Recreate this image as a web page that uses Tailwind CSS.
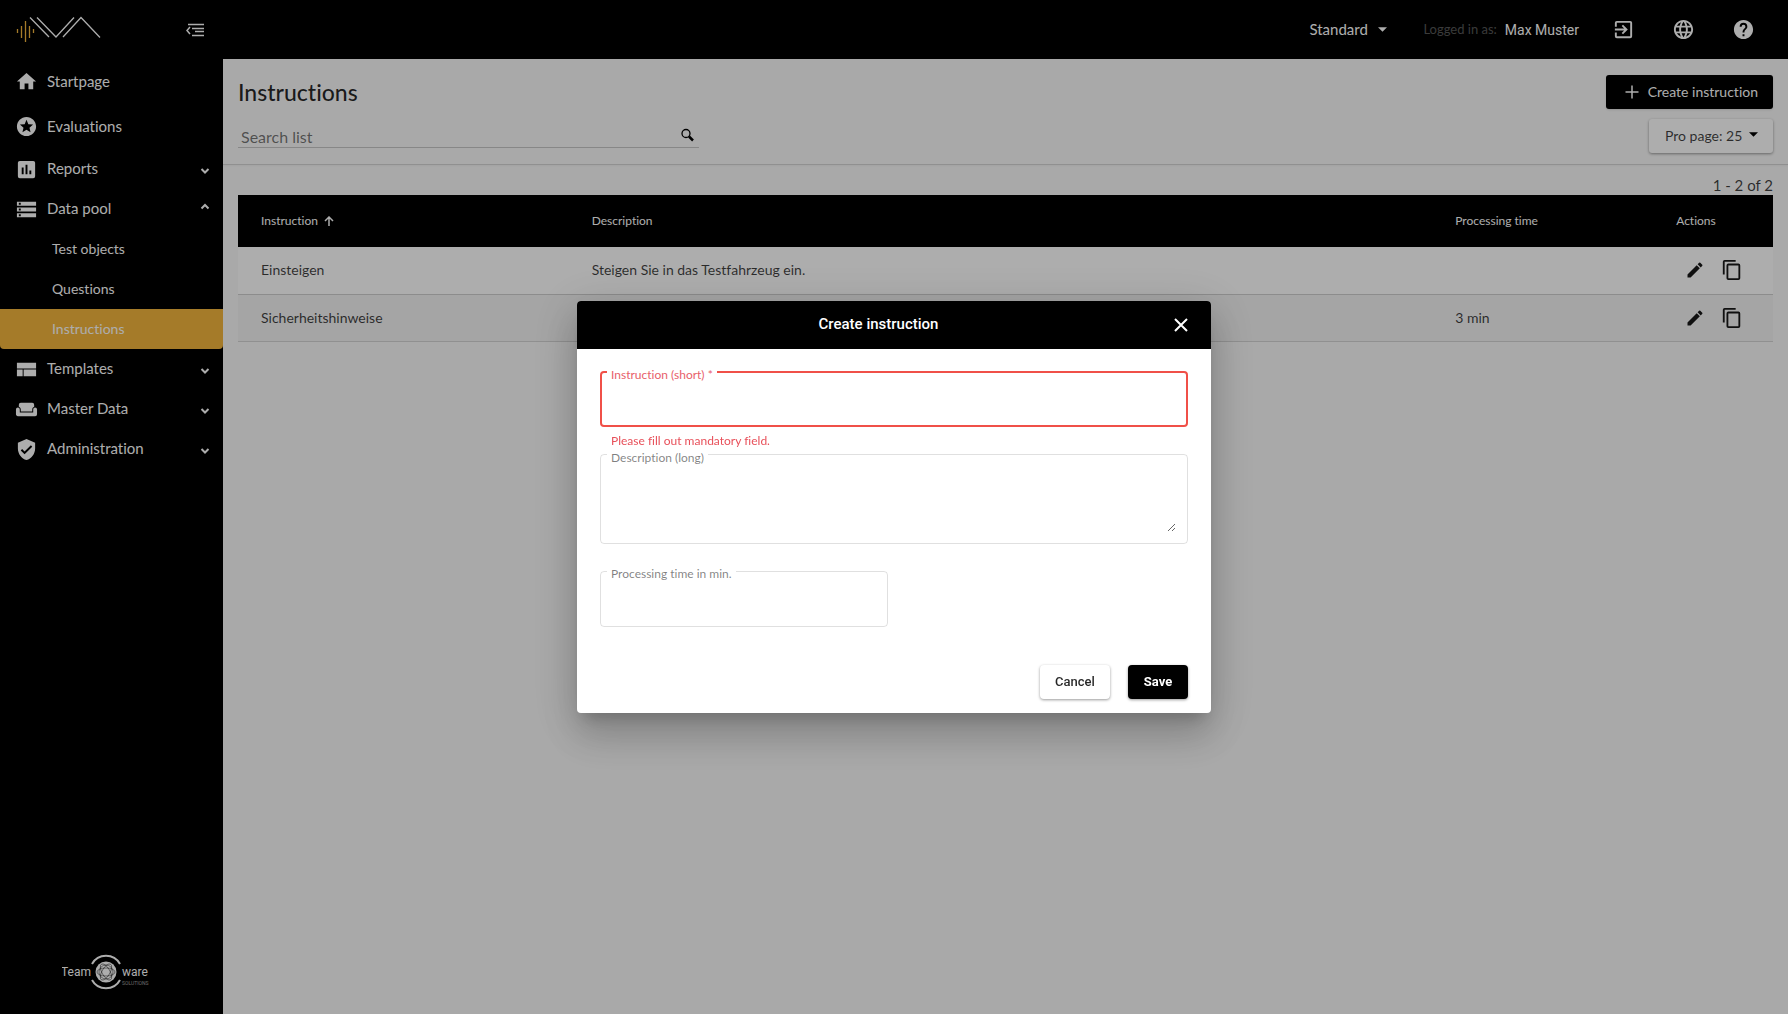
<!DOCTYPE html>
<html lang="en">
<head>
<meta charset="utf-8">
<meta name="viewport" content="width=device-width, initial-scale=1">
<title>Instructions</title>
<script src="https://cdn.jsdelivr.net/npm/@tailwindcss/browser@4"></script>
</head>
<body class="flex h-screen flex-col overflow-hidden bg-[#fafafa] font-[Lato,sans-serif] text-sm text-black/75 [font-variant-ligatures:none]">

<!-- Icon sprite -->
<svg class="hidden" aria-hidden="true">
  <symbol id="chev-down" viewBox="0 0 10 10"><path d="M1.500 3 5 6.500 8.500 3" fill="none" stroke="currentColor" stroke-width="2"/></symbol>
  <symbol id="chev-up" viewBox="0 0 10 10"><path d="M1.500 6.500 5 3l3.500 3.500" fill="none" stroke="currentColor" stroke-width="2"/></symbol>
  <symbol id="caret" viewBox="0 0 10 5"><path d="M0 0h10L5 5z" fill="currentColor"/></symbol>
  <symbol id="pencil" viewBox="0 0 24 24"><path fill="currentColor" d="M3 17.250V21h3.750L17.810 9.940l-3.750-3.750L3 17.250zM20.710 7.040a1 1 0 0 0 0-1.410l-2.340-2.340a1 1 0 0 0-1.410 0l-1.830 1.830 3.750 3.750 1.830-1.830z"/></symbol>
  <symbol id="copy" viewBox="0 0 24 24"><path fill="currentColor" d="M16 1H4a2 2 0 0 0-2 2v14h2V3h12V1zm3 4H8a2 2 0 0 0-2 2v14a2 2 0 0 0 2 2h11a2 2 0 0 0 2-2V7a2 2 0 0 0-2-2zm0 16H8V7h11v14z"/></symbol>
</svg>

<header class="flex h-[59px] shrink-0 items-center bg-black text-white">
  <div class="flex w-[223px] shrink-0 items-center justify-between pr-[18px] pl-4">
    <svg class="h-7 w-[86px]" viewBox="0 0 86 28" fill="none" aria-label="IVA">
      <path d="M1.500 13v4M5.500 10v12M9.500 5v21M13.500 10v12M17.500 13v4" stroke="#f4b63d" stroke-width="1.300"/>
      <path d="M14 1.500 33 21M21 1.500 40 21 58 1.500M47 21 65 1.500 84 21.500" stroke="#fff" stroke-width="1.300"/>
    </svg>
    <button aria-label="Collapse menu">
      <svg class="h-4 w-5" viewBox="0 0 20 16" fill="none" stroke="#fff" stroke-width="1.500"><path d="M3 2.500h16M7 6.500h12M10 9.500h9M7 13.500h12M5 5 2 8.500 5 12"/></svg>
    </button>
  </div>
  <div class="ml-auto flex items-center pr-[33px]">
    <label class="relative flex items-center">
      <span class="sr-only">Mode</span>
      <select class="h-8 w-[78px] appearance-none bg-transparent text-[15px]"><option>Standard</option></select>
      <svg class="pointer-events-none absolute right-0 h-[5px] w-[9px]"><use href="#caret"/></svg>
    </label>
    <span class="ml-9 text-[13px] text-white/35">Logged in as:</span>
    <span class="ml-2 font-[Roboto,sans-serif]">Max Muster</span>
    <div class="ml-[33px] flex gap-[37px]">
      <button aria-label="Log out"><svg class="size-[23px]" viewBox="0 0 24 24" fill="currentColor"><path d="M10.090 15.590 11.500 17l5-5-5-5-1.410 1.410L12.670 11H3v2h9.670l-2.580 2.590zM19 3H5a2 2 0 0 0-2 2v4h2V5h14v14H5v-4H3v4a2 2 0 0 0 2 2h14a2 2 0 0 0 2-2V5a2 2 0 0 0-2-2z"/></svg></button>
      <button aria-label="Language"><svg class="size-[23px]" viewBox="0 0 24 24" fill="currentColor"><path d="M11.990 2C6.470 2 2 6.480 2 12s4.470 10 9.990 10C17.520 22 22 17.520 22 12S17.520 2 11.990 2zm6.930 6h-2.950a15.650 15.650 0 0 0-1.380-3.560A8.030 8.030 0 0 1 18.920 8zM12 4.040c.83 1.200 1.480 2.530 1.910 3.960h-3.820c.43-1.430 1.080-2.760 1.910-3.960zM4.260 14C4.100 13.360 4 12.690 4 12s.1-1.360.26-2h3.380c-.08.66-.14 1.320-.14 2s.06 1.340.14 2H4.260zm.82 2h2.950c.32 1.250.78 2.450 1.380 3.560A7.990 7.990 0 0 1 5.080 16zm2.950-8H5.080a7.990 7.990 0 0 1 4.330-3.560A15.650 15.650 0 0 0 8.030 8zM12 19.960c-.83-1.200-1.480-2.530-1.910-3.960h3.820c-.43 1.430-1.080 2.760-1.910 3.960zM14.340 14H9.660c-.09-.66-.16-1.320-.16-2s.07-1.350.16-2h4.680c.09.650.16 1.320.16 2s-.07 1.340-.16 2zm.25 5.560c.6-1.110 1.060-2.310 1.380-3.560h2.950a8.030 8.030 0 0 1-4.330 3.560zM16.360 14c.08-.66.14-1.320.14-2s-.06-1.340-.14-2h3.380c.16.640.26 1.310.26 2s-.1 1.360-.26 2h-3.380z"/></svg></button>
      <button aria-label="Help"><svg class="size-[23px]" viewBox="0 0 24 24" fill="currentColor"><path d="M12 2C6.480 2 2 6.480 2 12s4.480 10 10 10 10-4.480 10-10S17.520 2 12 2zm1 17h-2v-2h2v2zm2.070-7.750-.9.920C13.450 12.900 13 13.500 13 15h-2v-.5c0-1.100.45-2.100 1.170-2.830l1.240-1.260c.37-.36.590-.86.590-1.410a2 2 0 0 0-4 0H8a4 4 0 0 1 8 0c0 .88-.36 1.680-.93 2.250z"/></svg></button>
    </div>
  </div>
</header>

<div class="flex min-h-0 flex-1">
  <nav class="flex w-[223px] shrink-0 flex-col bg-black text-[15px] text-white" aria-label="Main">
    <a href="#" class="flex h-[45px] items-center gap-[9px] pl-[15px]"><svg class="size-[23px]" viewBox="0 0 24 24" fill="currentColor"><path d="M10 20v-6h4v6h5v-8h3L12 3 2 12h3v8z"/></svg>Startpage</a>
    <a href="#" class="flex h-[45px] items-center gap-[9px] pl-[15px]"><svg class="size-[23px]" viewBox="0 0 24 24" fill="currentColor"><path d="M11.990 2C6.470 2 2 6.480 2 12s4.470 10 9.990 10C17.520 22 22 17.520 22 12S17.520 2 11.990 2zm4.240 16L12 15.450 7.770 18l1.120-4.810-3.730-3.230 4.920-.42L12 5l1.920 4.530 4.920.42-3.730 3.230L16.230 18z"/></svg>Evaluations</a>
    <a href="#" class="flex h-10 items-center gap-[9px] pr-[13px] pl-[15px]"><svg class="size-[23px]" viewBox="0 0 24 24" fill="currentColor"><path d="M19 3H5a2 2 0 0 0-2 2v14a2 2 0 0 0 2 2h14a2 2 0 0 0 2-2V5a2 2 0 0 0-2-2zM9 17H7v-7h2v7zm4 0h-2V7h2v10zm4 0h-2v-4h2v4z"/></svg>Reports<svg class="mt-1 ml-auto size-[10px]"><use href="#chev-down"/></svg></a>
    <a href="#" class="flex h-10 items-center gap-[9px] pr-[13px] pl-[15px]"><svg class="size-[23px]" viewBox="0 0 24 24" fill="currentColor"><path d="M2 20h20v-4H2v4zm2-3h2v2H4v-2zM2 4v4h20V4H2zm4 3H4V5h2v2zm-4 7h20v-4H2v4zm2-3h2v2H4v-2z"/></svg>Data pool<svg class="mb-1 ml-auto size-[10px]"><use href="#chev-up"/></svg></a>
    <a href="#" class="flex h-10 items-center pl-[52px] text-sm">Test objects</a>
    <a href="#" class="flex h-10 items-center pl-[52px] text-sm">Questions</a>
    <a href="#" aria-current="page" class="flex h-10 items-center rounded-b bg-[#f4b63d] pl-[52px] text-sm">Instructions</a>
    <a href="#" class="flex h-10 items-center gap-[9px] pr-[13px] pl-[15px]"><svg class="size-[23px]" viewBox="0 0 24 24" fill="currentColor"><path d="M2 5h20v6H2zM2 12h6v7H2zM9 12h13v7H9z"/></svg>Templates<svg class="mt-1 ml-auto size-[10px]"><use href="#chev-down"/></svg></a>
    <a href="#" class="flex h-10 items-center gap-[9px] pr-[13px] pl-[15px]"><svg class="size-[23px]" viewBox="0 0 24 24" fill="currentColor"><path d="M21 10a2 2 0 0 0-2 2v3H5v-3a2 2 0 1 0-4 0v5c0 1.100.9 2 2 2h18a2 2 0 0 0 2-2v-5a2 2 0 0 0-2-2zM18 5H6a2 2 0 0 0-2 2v2.150c1.160.41 2 1.510 2 2.820V14h12v-2.030c0-1.300.84-2.400 2-2.820V7a2 2 0 0 0-2-2z"/></svg>Master Data<svg class="mt-1 ml-auto size-[10px]"><use href="#chev-down"/></svg></a>
    <a href="#" class="flex h-10 items-center gap-[9px] pr-[13px] pl-[15px]"><svg class="size-[23px]" viewBox="0 0 24 24" fill="currentColor"><path d="M12 1 3 5v6c0 5.550 3.840 10.740 9 12 5.160-1.260 9-6.450 9-12V5l-9-4zm-2 16-4-4 1.410-1.410L10 14.170l6.590-6.590L18 9l-8 8z"/></svg>Administration<svg class="mt-1 ml-auto size-[10px]"><use href="#chev-down"/></svg></a>

    <!-- Vendor logo -->
    <svg class="mx-auto mt-auto mb-5 h-11 w-[100px]" viewBox="0 0 100 44" fill="#fff" aria-label="Teamware Solutions">
      <text x="29" y="26" text-anchor="end" font-family="Roboto, sans-serif" font-size="12">Team</text>
      <text x="60" y="26" font-family="Roboto, sans-serif" font-size="12">ware</text>
      <text x="60" y="35" font-family="Roboto, sans-serif" font-size="5" fill-opacity=".6">SOLUTIONS</text>
      <circle cx="44" cy="22" r="10.500"/>
      <g fill="none" stroke="#000" stroke-opacity=".55" stroke-width=".8"><ellipse cx="44" cy="22" rx="9" ry="4"/><ellipse cx="44" cy="22" rx="9" ry="4" transform="rotate(60 44 22)"/><ellipse cx="44" cy="22" rx="9" ry="4" transform="rotate(120 44 22)"/><circle cx="44" cy="22" r="7"/></g>
      <path d="M30 14a16 16 0 0 1 28 0M30 30a16 16 0 0 0 28 0" fill="none" stroke="#fff" stroke-width="2"/>
    </svg>
  </nav>

  <main class="min-w-0 flex-1">
    <div class="flex h-[106px] items-start justify-between border-b border-black/15 px-[15px] shadow-xs">
      <div class="w-[461px] pt-[18px]">
        <h1 class="text-[23px] leading-[30px] font-medium text-black/85">Instructions</h1>
        <label class="mt-[15px] flex h-[26px] items-center border-b border-black/20 pr-1">
          <span class="sr-only">Search list</span>
          <input type="text" placeholder="Search list" class="h-6 min-w-0 flex-1 pt-1 pl-[3px] text-base leading-5 placeholder:text-black/55">
          <svg class="size-4 text-black" viewBox="0 0 16 16" fill="none" stroke="currentColor"><circle cx="7" cy="6.500" r="4" stroke-width="1.300"/><path d="m10 9.500 4 4" stroke-width="2.500"/></svg>
        </label>
      </div>
      <div class="flex flex-col items-end gap-[10px] pt-4">
        <button class="flex h-[34px] w-[167px] items-center justify-between rounded-[3px] bg-black pr-[15px] pl-[18px] whitespace-nowrap text-white shadow"><svg class="size-4" viewBox="0 0 16 16" stroke="currentColor" stroke-width="1.500"><path d="M8 1.500v13M1.500 8h13"/></svg>Create instruction</button>
        <label class="relative flex h-[34px] w-[124px] items-center rounded-[3px] bg-white shadow-[0_1px_3px_rgba(0,0,0,0.4)]">
          <span class="sr-only">Entries per page</span>
          <select class="h-full w-full appearance-none pl-4"><option>Pro page: 25</option></select>
          <svg class="pointer-events-none absolute right-[15px] mb-1 h-[5px] w-[9px] text-black"><use href="#caret"/></svg>
        </label>
      </div>
    </div>

    <div class="px-[15px] pt-[10px]">
      <p class="text-right text-[15px] leading-5">1 - 2 of 2</p>
      <table class="w-full table-fixed border-collapse text-left">
        <colgroup><col class="w-[22%]"><col class="w-[56%]"><col class="w-[14%]"><col></colgroup>
        <thead class="bg-black text-xs text-white">
          <tr class="h-[52px]">
            <th class="pl-[23px] font-normal" aria-sort="ascending"><span class="flex items-center gap-[6px]">Instruction<svg class="size-[10px]" viewBox="0 0 10 10" fill="none" stroke="currentColor" stroke-width="1.500"><path d="M5 10V1M1 5l4-4 4 4"/></svg></span></th>
            <th class="pl-4 font-normal">Description</th>
            <th class="pl-5 font-normal">Processing time</th>
            <th class="pl-[26px] font-normal">Actions</th>
          </tr>
        </thead>
        <tbody>
          <tr class="h-[47px] border-b border-black/15 bg-white">
            <td class="pl-[23px]">Einsteigen</td>
            <td class="pl-4">Steigen Sie in das Testfahrzeug ein.</td>
            <td class="pl-5"></td>
            <td class="pr-[30px]"><span class="flex items-center justify-end gap-4 text-black/90"><button aria-label="Edit"><svg class="size-5"><use href="#pencil"/></svg></button><button aria-label="Copy"><svg class="size-[22px]"><use href="#copy"/></svg></button></span></td>
          </tr>
          <tr class="h-[47px] border-b border-black/15 bg-[#f3f3f3]">
            <td class="pl-[23px]">Sicherheitshinweise</td>
            <td class="pl-4"></td>
            <td class="pl-5">3 min</td>
            <td class="pr-[30px]"><span class="flex items-center justify-end gap-4 text-black/90"><button aria-label="Edit"><svg class="size-5"><use href="#pencil"/></svg></button><button aria-label="Copy"><svg class="size-[22px]"><use href="#copy"/></svg></button></span></td>
          </tr>
        </tbody>
      </table>
    </div>
  </main>
</div>

<!-- Modal dialog -->
<div class="fixed inset-0 flex items-center justify-center bg-black/32">
  <form role="dialog" aria-modal="true" aria-labelledby="dialog-title" class="w-[634px] overflow-hidden rounded bg-white shadow-[0_11px_15px_-7px_rgba(0,0,0,0.2),0_24px_38px_3px_rgba(0,0,0,0.14),0_9px_46px_8px_rgba(0,0,0,0.12)]">
    <div class="flex h-12 items-center bg-black pr-[23px] pl-[6px] text-white">
      <h2 id="dialog-title" class="flex-1 text-center font-[Roboto,sans-serif] text-[15px] font-medium">Create instruction</h2>
      <button type="button" aria-label="Close"><svg class="size-[14px]" viewBox="0 0 14 14" stroke="currentColor" stroke-width="2"><path d="m1 1 12 12M13 1 1 13"/></svg></button>
    </div>
    <div class="px-[23px] pt-[22px] pb-[14px]">
      <div class="relative">
        <input id="short" required class="block h-14 w-full rounded border-2 border-[#f05048] px-3">
        <label for="short" class="absolute -top-1 left-[7px] bg-white px-1 text-xs leading-4 text-[#e8606a]">Instruction (short) *</label>
      </div>
      <p class="mt-[5px] pl-[11px] text-xs leading-[18px] text-[#e8505a]">Please fill out mandatory field.</p>
      <div class="relative mt-1 rounded border border-black/12 p-[11px]">
        <textarea id="long" class="block h-[66px] w-full resize-y"></textarea>
        <label for="long" class="absolute -top-[5px] left-[6px] bg-white px-1 text-xs leading-4 text-black/50">Description (long)</label>
      </div>
      <div class="relative mt-[27px] w-[288px]">
        <input id="time" inputmode="numeric" class="block h-14 w-full rounded border border-black/12 px-3">
        <label for="time" class="absolute -top-[5px] left-[7px] bg-white px-1 text-xs leading-4 text-black/50">Processing time in min.</label>
      </div>
      <div class="mt-[38px] flex justify-end gap-[18px] font-[Roboto,sans-serif] text-[13px] font-medium">
        <button type="button" class="h-[34px] w-[70px] rounded text-black/85 shadow-[0_1px_3px_rgba(0,0,0,0.4)]">Cancel</button>
        <button type="submit" class="h-[34px] w-[60px] rounded bg-black font-bold text-white shadow-[0_1px_3px_rgba(0,0,0,0.4)]">Save</button>
      </div>
    </div>
  </form>
</div>
</body>
</html>
